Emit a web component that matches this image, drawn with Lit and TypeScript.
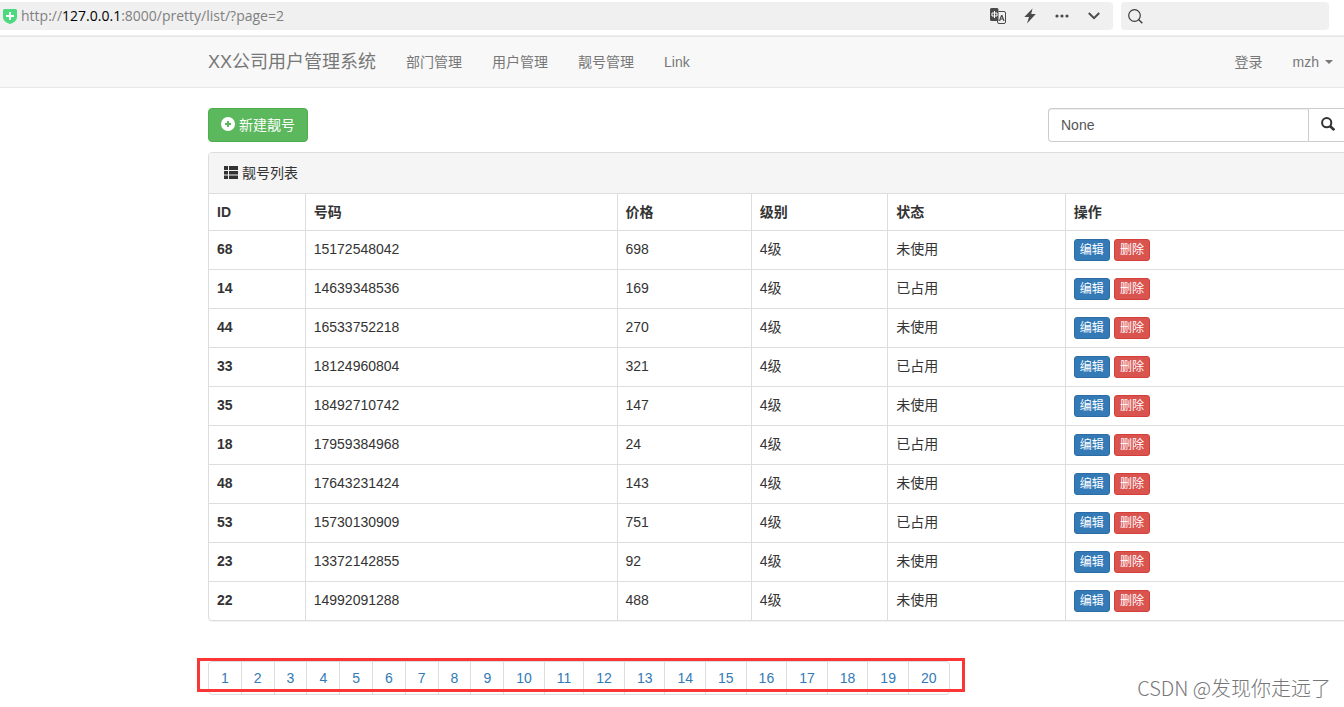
import { LitElement, html, css, svg } from "lit";
import { customElement, state } from "lit/decorators.js";

interface PrettyNumber {
  id: number;
  mobile: string;
  price: number;
  level: string;
  status: string;
}

const UNUSED = "未使用";
const USED = "已占用";

const ROWS: PrettyNumber[] = [
  { id: 68, mobile: "15172548042", price: 698, level: "4级", status: UNUSED },
  { id: 14, mobile: "14639348536", price: 169, level: "4级", status: USED },
  { id: 44, mobile: "16533752218", price: 270, level: "4级", status: UNUSED },
  { id: 33, mobile: "18124960804", price: 321, level: "4级", status: USED },
  { id: 35, mobile: "18492710742", price: 147, level: "4级", status: UNUSED },
  { id: 18, mobile: "17959384968", price: 24, level: "4级", status: USED },
  { id: 48, mobile: "17643231424", price: 143, level: "4级", status: UNUSED },
  { id: 53, mobile: "15730130909", price: 751, level: "4级", status: USED },
  { id: 23, mobile: "13372142855", price: 92, level: "4级", status: UNUSED },
  { id: 22, mobile: "14992091288", price: 488, level: "4级", status: UNUSED },
];

const shieldIcon = svg`<svg width="14" height="16" viewBox="0 0 14 16" aria-hidden="true">
  <path d="M1.500 1h11a1.500 1.500 0 0 1 1.500 1.500V9c0 3.500-3.500 6-7 7C3.500 15 0 12.500 0 9V2.500A1.500 1.500 0 0 1 1.500 1z" fill="#4cd97f"/>
  <path d="M7 4v8M3 8h8" stroke="#fff" stroke-width="2"/></svg>`;

const translateIcon = svg`<svg width="16" height="16" viewBox="0 0 16 16" aria-hidden="true">
  <path d="M8.500 3.500h5.500a1.500 1.500 0 0 1 1.500 1.500v9a1.500 1.500 0 0 1-1.500 1.500H9a1.500 1.500 0 0 1-1.500-1.500v-1" fill="none" stroke="#4a4a4a"/>
  <path d="M1.500 0H7a1.500 1.500 0 0 1 1.500 1.500V13h-7A1.500 1.500 0 0 1 0 11.500v-10A1.500 1.500 0 0 1 1.500 0z" fill="#4a4a4a"/>
  <path d="M2 5h5v3H2zM4.500 3v7" fill="none" stroke="#fff"/>
  <path d="M9.500 13l2-5.500h.5l2 5.500M10.300 11h3" fill="none" stroke="#4a4a4a" stroke-width="1.200"/></svg>`;

const boltIcon = svg`<svg width="12" height="16" viewBox="0 0 12 16" aria-hidden="true">
  <path d="M8.500 0.500L0.300 9H5L3 15.500 11.800 6H7.200z" fill="#4a4a4a"/></svg>`;

const dotsIcon = svg`<svg width="14" height="4" viewBox="0 0 14 4" aria-hidden="true">
  <g fill="#4a4a4a"><circle cx="2" cy="2" r="1.600"/><circle cx="7" cy="2" r="1.600"/><circle cx="12" cy="2" r="1.600"/></g></svg>`;

const chevronIcon = svg`<svg width="12" height="8" viewBox="0 0 12 8" aria-hidden="true">
  <path d="M0.800 1L6 6.200 11.200 1" fill="none" stroke="#4a4a4a" stroke-width="2"/></svg>`;

const lensIcon = svg`<svg width="15" height="15" viewBox="0 0 15 15" aria-hidden="true">
  <circle cx="6.500" cy="6.500" r="5.800" fill="none" stroke="#3c3c3c" stroke-width="1.200"/>
  <path d="M10.800 10.800L14.300 14.300" stroke="#3c3c3c" stroke-width="1.400"/></svg>`;

const plusIcon = svg`<svg width="14" height="16" viewBox="0 0 14 16" aria-hidden="true">
  <circle cx="7" cy="7" r="7" fill="#fff"/><path d="M7 4v6M4 7h6" stroke="#5cb85c" stroke-width="2"/></svg>`;

const listIcon = svg`<svg width="14" height="14" viewBox="0 0 14 14" aria-hidden="true">
  <path d="M0 0h4v4H0zM5 0h9v4H5zM0 5h4v3.500H0zM5 5h9v3.500H5zM0 9.500h4v3.500H0zM5 9.500h9v3.500H5z" fill="#333"/></svg>`;

const searchIcon = svg`<svg width="14" height="16" viewBox="0 0 14 16" aria-hidden="true">
  <circle cx="5.700" cy="5.700" r="4.600" fill="none" stroke="#333" stroke-width="2"/>
  <path d="M9 9L13.200 13" stroke="#333" stroke-width="2.600"/></svg>`;

@customElement("browser-bar")
class BrowserBar extends LitElement {
  static styles = css`
    :host {
      display: block;
      font-family: "Open Sans", "Noto Sans", sans-serif;
    }
    .bar {
      display: flex;
      gap: 8px;
      box-sizing: border-box;
      height: 36px;
      padding: 2px 15px 5px 0;
      border-bottom: 1px solid #ededed;
      background: #fff;
    }
    .address {
      flex: 1;
      display: flex;
      align-items: center;
      gap: 4px;
      padding: 0 11px 0 3px;
      background: #f0f0f0;
      border-radius: 0 4px 4px 0;
    }
    .url {
      flex: 1;
      font-size: 14px;
      line-height: 20px;
      color: #808080;
      white-space: nowrap;
    }
    .host {
      color: #000;
    }
    .tools {
      display: flex;
      gap: 16px;
    }
    .tool {
      display: flex;
      align-items: center;
      justify-content: center;
      width: 16px;
      height: 28px;
      padding: 0;
      border: 0;
      background: none;
    }
    .search {
      display: flex;
      align-items: center;
      gap: 6px;
      box-sizing: border-box;
      width: 208px;
      padding: 0 7px;
      background: #f0f0f0;
      border-radius: 4px;
    }
    .query {
      flex: 1;
      min-width: 0;
      border: 0;
      outline: 0;
      background: none;
      font: inherit;
    }
  `;

  render() {
    return html`
      <div class="bar">
        <div class="address">
          ${shieldIcon}
          <span class="url">http://<span class="host">127.0.0.1</span>:8000/pretty/list/?page=2</span>
          <div class="tools">
            <button class="tool" aria-label="翻译">${translateIcon}</button>
            <button class="tool" aria-label="加速">${boltIcon}</button>
            <button class="tool" aria-label="更多">${dotsIcon}</button>
            <button class="tool" aria-label="展开">${chevronIcon}</button>
          </div>
        </div>
        <label class="search">${lensIcon}<input class="query" type="text" aria-label="搜索" /></label>
      </div>
    `;
  }
}

@customElement("site-nav")
class SiteNav extends LitElement {
  static styles = css`
    :host {
      display: block;
    }
    .navbar {
      display: flex;
      align-items: center;
      height: 50px;
      padding: 0 11px 0 208px;
      background: #f8f8f8;
      border-top: 1px solid #e7e7e7;
      border-bottom: 1px solid #e7e7e7;
    }
    .link,
    .brand {
      color: #777;
      text-decoration: none;
      white-space: nowrap;
      line-height: 20px;
    }
    .brand {
      font-size: 18px;
      margin-right: 30px;
    }
    .group {
      display: flex;
      gap: 30px;
    }
    .right {
      margin-left: auto;
    }
    .menu {
      display: flex;
      align-items: center;
      gap: 6px;
    }
    .caret {
      border-top: 4px solid #777;
      border-left: 4px solid transparent;
      border-right: 4px solid transparent;
    }
  `;

  render() {
    return html`
      <nav class="navbar">
        <a class="brand" href="#">XX公司用户管理系统</a>
        <div class="group">
          ${["部门管理", "用户管理", "靓号管理", "Link"].map(
            (name) => html`<a class="link" href="#">${name}</a>`
          )}
        </div>
        <div class="group right">
          <a class="link" href="#">登录</a>
          <a class="link menu" href="#">mzh<span class="caret"></span></a>
        </div>
      </nav>
    `;
  }
}

@customElement("number-table")
class NumberTable extends LitElement {
  static styles = css`
    :host {
      display: block;
    }
    .panel {
      border: 1px solid #ddd;
      border-radius: 4px;
      box-shadow: 0 1px 1px rgba(0, 0, 0, 0.05);
      overflow: hidden;
    }
    .heading {
      display: flex;
      align-items: center;
      gap: 4px;
      padding: 10px 15px;
      line-height: 20px;
      background: #f5f5f5;
    }
    .table {
      width: 100%;
      table-layout: fixed;
      border-collapse: separate;
      border-spacing: 0;
    }
    .cell {
      padding: 8px;
      line-height: 20px;
      text-align: left;
      vertical-align: top;
      border-top: 1px solid #ddd;
      border-right: 1px solid #ddd;
    }
    .cell:last-child {
      border-right: 0;
    }
    .id {
      width: 8.5%;
    }
    .mobile {
      width: 27.4%;
    }
    .price {
      width: 11.8%;
    }
    .level {
      width: 12%;
    }
    .status {
      width: 15.6%;
    }
    .actions {
      display: flex;
      gap: 4px;
    }
    .btn {
      padding: 1px 5px;
      border: 1px solid #2e6da4;
      border-radius: 3px;
      background: #337ab7;
      color: #fff;
      font-size: 12px;
      line-height: 18px;
      text-decoration: none;
    }
    .danger {
      background: #d9534f;
      border-color: #d43f3a;
    }
  `;

  render() {
    return html`
      <section class="panel">
        <div class="heading">${listIcon}<span>靓号列表</span></div>
        <table class="table">
          <colgroup>
            <col class="id" /><col class="mobile" /><col class="price" />
            <col class="level" /><col class="status" /><col />
          </colgroup>
          <thead>
            <tr>
              ${["ID", "号码", "价格", "级别", "状态", "操作"].map(
                (name) => html`<th class="cell" scope="col">${name}</th>`
              )}
            </tr>
          </thead>
          <tbody>
            ${ROWS.map(
              (row) => html`<tr>
                <th class="cell" scope="row">${row.id}</th>
                <td class="cell">${row.mobile}</td>
                <td class="cell">${row.price}</td>
                <td class="cell">${row.level}</td>
                <td class="cell">${row.status}</td>
                <td class="cell">
                  <div class="actions">
                    <a class="btn" href="#">编辑</a>
                    <a class="btn danger" href="#">删除</a>
                  </div>
                </td>
              </tr>`
            )}
          </tbody>
        </table>
      </section>
    `;
  }
}

@customElement("page-links")
class PageLinks extends LitElement {
  static styles = css`
    :host {
      display: block;
    }
    .wrap {
      position: relative;
      width: fit-content;
    }
    .list {
      display: flex;
      margin: 0;
      padding: 0;
      list-style: none;
      border: 1px solid #ddd;
      border-radius: 4px;
    }
    .item + .item {
      border-left: 1px solid #ddd;
    }
    .link {
      display: block;
      padding: 6px 12px;
      line-height: 20px;
      color: #337ab7;
      text-decoration: none;
    }
    .mark {
      position: absolute;
      inset: -3px -15px 3px -11px;
      border: 3px solid #fc3536;
      pointer-events: none;
    }
  `;

  render() {
    const pages = Array.from({ length: 20 }, (_, i) => i + 1);
    return html`
      <nav class="wrap" aria-label="分页">
        <ul class="list">
          ${pages.map(
            (page) => html`<li class="item"><a class="link" href="?page=${page}">${page}</a></li>`
          )}
        </ul>
        <div class="mark"></div>
      </nav>
    `;
  }
}

@customElement("app-root")
class AppRoot extends LitElement {
  static styles = css`
    :host {
      display: block;
      position: relative;
      min-height: 100vh;
      overflow: hidden;
      background: #fff;
      color: #333;
      font-family: "Liberation Sans", "Noto Sans CJK SC", sans-serif;
      font-size: 14px;
      line-height: 20px;
    }
    .content {
      display: flex;
      flex-direction: column;
      margin: 20px -4px 0 208px;
    }
    .toolbar {
      display: flex;
      justify-content: space-between;
      margin-bottom: 10px;
    }
    .create {
      display: flex;
      align-items: center;
      gap: 4px;
      padding: 6px 12px;
      border: 1px solid #4cae4c;
      border-radius: 4px;
      background: #5cb85c;
      color: #fff;
      line-height: 20px;
      text-decoration: none;
    }
    .search {
      display: flex;
      width: 300px;
    }
    .field {
      flex: 1;
      min-width: 0;
      box-sizing: border-box;
      height: 34px;
      padding: 6px 12px;
      border: 1px solid #ccc;
      border-right: 0;
      border-radius: 4px 0 0 4px;
      box-shadow: inset 0 1px 1px rgba(0, 0, 0, 0.075);
      outline: 0;
      color: #555;
      font: inherit;
    }
    .go {
      display: flex;
      align-items: center;
      padding: 0 12px;
      border: 1px solid #ccc;
      border-radius: 0 4px 4px 0;
      background: #fff;
    }
    .pages {
      margin-top: 40px;
    }
    .watermark {
      position: absolute;
      right: 13px;
      bottom: 5px;
      color: #777;
      font-family: "Noto Sans CJK SC", sans-serif;
      font-size: 20px;
      font-weight: 300;
      line-height: 28px;
    }
  `;

  @state() private query = "None";

  render() {
    return html`
      <browser-bar></browser-bar>
      <site-nav></site-nav>
      <main class="content">
        <div class="toolbar">
          <a class="create" href="#">${plusIcon}<span>新建靓号</span></a>
          <form class="search" @submit=${(e: Event) => e.preventDefault()}>
            <input
              class="field"
              type="text"
              aria-label="搜索号码"
              .value=${this.query}
              @input=${(e: Event) => (this.query = (e.target as HTMLInputElement).value)}
            />
            <button class="go" type="submit" aria-label="搜索">${searchIcon}</button>
          </form>
        </div>
        <number-table></number-table>
        <page-links class="pages"></page-links>
      </main>
      <div class="watermark">CSDN @发现你走远了</div>
    `;
  }
}
